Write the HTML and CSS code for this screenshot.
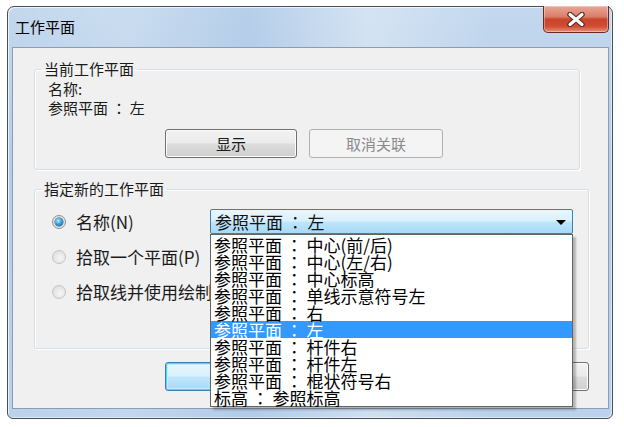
FILE: index.html
```html
<!DOCTYPE html>
<html lang="zh-CN">
<head>
<meta charset="utf-8">
<title>工作平面</title>
<link rel="stylesheet" href="styles.css">
</head>
<body>
<div class="window">
  <div class="titlebar">
    <span class="title">工作平面</span>
    <div class="close">
      <svg width="22" height="15" viewBox="0 0 22 15">
        <path d="M5 2.5 L17 12.5 M17 2.5 L5 12.5" stroke="#5a2a22" stroke-width="5.5" stroke-linecap="round"/>
        <path d="M5 2.5 L17 12.5 M17 2.5 L5 12.5" stroke="#ffffff" stroke-width="3.2" stroke-linecap="round"/>
      </svg>
    </div>
  </div>
  <div class="client">
    <fieldset class="group g1">
      <legend>当前工作平面</legend>
      <div class="g1-body">
        <div class="line">名称:</div>
        <div class="line">参照平面 <span class="c" lang="zh-TW">：</span> 左</div>
        <div class="btnrow">
          <button class="btn w132">显示</button>
          <button class="btn w134" disabled>取消关联</button>
        </div>
      </div>
    </fieldset>
    <fieldset class="group g2">
      <legend>指定新的工作平面</legend>
      <div class="g2-body">
        <div class="row">
          <label class="radio-label"><span class="radio checked"></span>名称(N)</label>
          <div class="combo">
            <span class="combo-text">参照平面 <span class="c" lang="zh-TW">：</span> 左</span>
            <span class="arrow"></span>
            <ul class="dropdown">
              <li>参照平面 <span class="c" lang="zh-TW">：</span> 中心(前/后)</li>
              <li>参照平面 <span class="c" lang="zh-TW">：</span> 中心(左/右)</li>
              <li>参照平面 <span class="c" lang="zh-TW">：</span> 中心标高</li>
              <li>参照平面 <span class="c" lang="zh-TW">：</span> 单线示意符号左</li>
              <li>参照平面 <span class="c" lang="zh-TW">：</span> 右</li>
              <li class="sel">参照平面 <span class="c" lang="zh-TW">：</span> 左</li>
              <li>参照平面 <span class="c" lang="zh-TW">：</span> 杆件右</li>
              <li>参照平面 <span class="c" lang="zh-TW">：</span> 杆件左</li>
              <li>参照平面 <span class="c" lang="zh-TW">：</span> 棍状符号右</li>
              <li>标高 <span class="c" lang="zh-TW">：</span> 参照标高</li>
            </ul>
          </div>
        </div>
        <div class="row">
          <label class="radio-label"><span class="radio"></span>拾取一个平面(P)</label>
        </div>
        <div class="row">
          <label class="radio-label"><span class="radio"></span>拾取线并使用绘制</label>
        </div>
      </div>
    </fieldset>
    <div class="actions">
      <button class="btn default w132">确定</button>
      <button class="btn w132">取消</button>
      <button class="btn w132">帮助</button>
    </div>
  </div>
</div>
</body>
</html>
```

FILE: styles.css
```css
* { box-sizing: border-box; }
html, body { margin: 0; padding: 0; background: #ffffff; }
body {
  font-family: "Noto Sans CJK SC", "Noto Sans", sans-serif;
  font-size: 15px;
  color: #1a1a1a;
}

.c { font-family: "Noto Sans CJK TC", "Noto Sans CJK SC", sans-serif; }

.window {
  margin: 6px 0 0 7px;
  width: 606px;
  height: 413px;
  border: 1px solid #4a4f57;
  border-radius: 7px 7px 6px 6px;
  background:
    linear-gradient(to right, rgba(255,255,255,0) 0%, rgba(255,255,255,0.12) 20%, rgba(160,190,225,0.35) 40%, rgba(255,255,255,0.3) 60%, rgba(255,255,255,0) 80%),
    linear-gradient(to bottom, #c3d8ee 0%, #b3cce8 40%, #bad2eb 100%);
  box-shadow: inset 1px 1px 0 rgba(255,255,255,0.7), inset -1px -1px 0 rgba(255,255,255,0.5);
}

.titlebar {
  height: 40px;
  display: flex;
  justify-content: space-between;
  align-items: flex-start;
}
.title {
  padding: 10px 0 0 7px;
  font-size: 15px;
  line-height: 20px;
  color: #000;
}
.close {
  margin: -1px 3px 0 0;
  width: 66px;
  height: 27px;
  border: 1px solid #6b2b20;
  border-top: none;
  border-radius: 0 0 5px 5px;
  background: linear-gradient(to bottom, #e9a797 0%, #dc7f69 40%, #c8442a 52%, #cf4d33 78%, #e79077 100%);
  box-shadow: inset 0 0 0 1px rgba(255,255,255,0.35);
  display: flex;
  align-items: center;
  justify-content: center;
}

.client {
  margin: 0 3px 0 4px;
  width: 597px;
  height: 362px;
  border: 1px solid #8d9cb0;
  background: #f0f0f0;
}

.group {
  margin: 0 0 0 21px;
  padding: 0;
  border: 1px solid #d5dfe5;
  border-radius: 3px;
  box-shadow: inset 1px 1px 0 #ffffff, 1px 1px 0 #ffffff;
  min-inline-size: 0;
}
.group legend {
  margin-left: 6px;
  padding: 0 3px;
  font-size: 15px;
  line-height: 18px;
  color: #1a1a1a;
}
.g1 { margin-top: 12px; width: 546px; }
.g2 { margin-top: 10px; width: 555px; }

.g1-body { padding: 1px 0 11px 13px; }
.line { line-height: 19px; white-space: pre; }
.btnrow { margin-top: 12px; display: flex; gap: 12px; padding-left: 117px; }

.btn {
  height: 29px;
  border: 1px solid #707070;
  border-radius: 3px;
  background: linear-gradient(to bottom, #f2f2f2 0%, #ebebeb 48%, #dddddd 52%, #cfcfcf 100%);
  box-shadow: inset 0 0 0 1px #fcfcfc;
  font-family: "Noto Sans CJK SC", sans-serif;
  font-size: 15px;
  color: #1a1a1a;
  padding: 0;
}
.btn:disabled {
  border-color: #adb2b5;
  background: #f4f4f4;
  color: #8a8a8a;
  box-shadow: none;
}
.btn.default {
  border-color: #3c7fb1;
  box-shadow: inset 0 0 0 1px #48d8fb, inset 0 0 0 2px #c6eaf7;
  background: linear-gradient(to bottom, #eaf6fd 0%, #d9f0fc 48%, #bee6fd 52%, #a7d9f5 100%);
}
.w132 { width: 132px; }
.w134 { width: 134px; }

.g2-body {
  padding: 11px 0 44px 17px;
  display: flex;
  flex-direction: column;
  gap: 10px;
}
.row {
  height: 25px;
  display: flex;
  align-items: center;
}
.radio-label {
  width: 158px;
  flex: none;
  display: flex;
  align-items: center;
  gap: 10px;
  white-space: nowrap;
  font-size: 17px;
  line-height: 20px;
  color: #1a1a1a;
}
.radio {
  flex: none;
  width: 14px;
  height: 14px;
  border-radius: 50%;
  border: 1px solid #c4c4c4;
  background: radial-gradient(circle at 60% 60%, #f6f6f6 0%, #e4e4e4 60%, #d4d4d4 100%);
  position: relative;
}
.radio.checked {
  border-color: #8e8f8f;
  background: radial-gradient(circle at 50% 50%, #f4f4f4 0%, #dcdcdc 100%);
}
.radio.checked::after {
  content: "";
  position: absolute;
  left: 2px; top: 2px;
  width: 8px; height: 8px;
  border-radius: 50%;
  background: radial-gradient(circle at 40% 35%, #b8ecff 0%, #3c9fe0 45%, #0b4f8e 100%);
  box-shadow: 0 0 0 0.5px #1c4f7e;
}

.combo {
  position: relative;
  width: 363px;
  height: 25px;
  border: 1px solid #3c7fb1;
  border-radius: 2px;
  background: linear-gradient(to bottom, #eaf6fd 0%, #d9f0fc 48%, #bee6fd 52%, #a7d9f5 100%);
  display: flex;
  align-items: center;
  justify-content: space-between;
  padding: 0 6px 0 4px;
}
.combo-text {
  font-size: 17px;
  line-height: 20px;
  color: #111;
  white-space: pre;
}
.arrow {
  width: 0; height: 0;
  border-left: 5px solid transparent;
  border-right: 5px solid transparent;
  border-top: 5px solid #000;
  margin-top: 1px;
}
.dropdown {
  position: absolute;
  z-index: 10;
  left: -1px;
  top: 24px;
  width: 363px;
  margin: 0;
  padding: 1px 0 0 0;
  list-style: none;
  background: #ffffff;
  border: 1px solid #646464;
  box-shadow: 3px 3px 2px rgba(0,0,0,0.25);
}
.dropdown li {
  height: 17px;
  line-height: 17px;
  font-size: 17px;
  padding-left: 3px;
  color: #000;
  white-space: pre;
}
.dropdown li.sel {
  background: #3399ff;
  color: #ffffff;
}

.actions {
  margin-top: 13px;
  display: flex;
  gap: 14px;
  padding-left: 152px;
}
```
